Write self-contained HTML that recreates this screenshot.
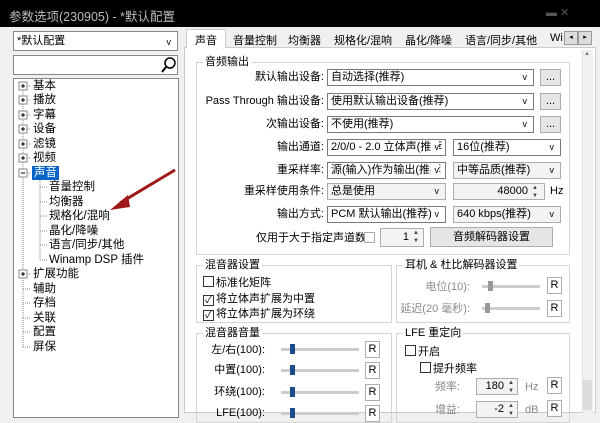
<!DOCTYPE html>
<html><head><meta charset="utf-8">
<style>
*{margin:0;padding:0;box-sizing:border-box}
body{width:600px;height:413px;overflow:hidden;background:#f0f0f0;font-family:"Liberation Sans","Noto Sans CJK SC",sans-serif;font-size:11px;color:#000;position:relative}
.a{position:absolute;white-space:nowrap}
.box{position:absolute;background:#fff;border:1px solid #adadad}
.cb{position:absolute;background:#fff;border:1px solid #7a7a7a;height:17px;line-height:15px;padding-left:3px;font-size:11px}
.cb.g{background:#f3f3f3;border-color:#adadad}
.cb .v{position:absolute;right:6px;top:0;font-size:9px}
.btn{position:absolute;background:#e6e6e6;border:1px solid #adadad;text-align:center;line-height:15px;height:17px}
.grp{position:absolute;border:1px solid #d5d5d5}
.grp .t{position:absolute;top:-8px;left:6px;background:#fff;padding:0 2px;line-height:14px}
.lbl{position:absolute;text-align:right;white-space:nowrap;line-height:14px}
.ti{position:absolute;line-height:14px;white-space:nowrap;font-size:11.5px}
.chk{display:inline-block;width:11px;height:11px;border:1px solid #333;vertical-align:-1px;margin-right:2px;background:#fff;font-size:10px;line-height:9px;text-align:center}
.sl{position:absolute;height:3px;background:#ccc}
.th{position:absolute;width:5px;height:10px;background:#1a4b8a}
.R{position:absolute;width:15px;height:17px;border:1px solid #adadad;background:#fff;text-align:center;line-height:15px;font-size:11px}
.gray{color:#8a8a8a}
.sp{position:absolute;font-size:6px;line-height:8px;color:#444}
</style></head><body>
<div class="a" style="left:0;top:0;width:600px;height:27px;background:#000"></div>
<div class="a" style="left:9px;top:6px;color:#bbb;font-size:12.5px">参数选项(230905) - *默认配置</div>
<div class="a" style="left:546px;top:6px;color:#555;font-size:11px">▬ ✕</div>

<!-- left -->
<div class="cb" style="left:13px;top:31px;width:165px;height:20px;line-height:18px;border-color:#888">*默认配置<span class="v" style="top:1px">v</span></div>
<div class="box" style="left:13px;top:55px;width:165px;height:20px;border-color:#888"></div>
<svg class="a" style="left:161px;top:56px" width="16" height="18"><circle cx="9" cy="7" r="5" fill="none" stroke="#000" stroke-width="1.5"/><line x1="5" y1="11" x2="1" y2="16" stroke="#000" stroke-width="2"/></svg>
<div class="box" style="left:13px;top:78px;width:166px;height:340px;border-color:#888"></div>
<svg class="a" style="left:15px;top:80px" width="120" height="280">
<g stroke="#888" stroke-dasharray="1,1" fill="none">
<line x1="8" y1="6" x2="8" y2="268"/>
<line x1="25" y1="100" x2="25" y2="180"/>
</g>
<g stroke="#888" stroke-dasharray="1,1">
<line x1="8" y1="6" x2="16" y2="6"/><line x1="8" y1="20" x2="16" y2="20"/><line x1="8" y1="35" x2="16" y2="35"/><line x1="8" y1="49" x2="16" y2="49"/><line x1="8" y1="64" x2="16" y2="64"/><line x1="8" y1="78" x2="16" y2="78"/><line x1="8" y1="93" x2="16" y2="93"/>
<line x1="25" y1="107" x2="33" y2="107"/><line x1="25" y1="122" x2="33" y2="122"/><line x1="25" y1="136" x2="33" y2="136"/><line x1="25" y1="151" x2="33" y2="151"/><line x1="25" y1="165" x2="33" y2="165"/><line x1="25" y1="180" x2="33" y2="180"/>
<line x1="8" y1="194" x2="16" y2="194"/><line x1="8" y1="209" x2="16" y2="209"/><line x1="8" y1="223" x2="16" y2="223"/><line x1="8" y1="238" x2="16" y2="238"/><line x1="8" y1="252" x2="16" y2="252"/><line x1="8" y1="267" x2="16" y2="267"/>
</g>
<g fill="#fff" stroke="#888">
<rect x="4" y="2" width="8" height="8"/><rect x="4" y="16" width="8" height="8"/><rect x="4" y="31" width="8" height="8"/><rect x="4" y="45" width="8" height="8"/><rect x="4" y="60" width="8" height="8"/><rect x="4" y="74" width="8" height="8"/><rect x="4" y="89" width="8" height="8"/><rect x="4" y="190" width="8" height="8"/>
</g>
<g stroke="#000"><line x1="6" y1="6" x2="10" y2="6"/><line x1="6" y1="20" x2="10" y2="20"/><line x1="6" y1="35" x2="10" y2="35"/><line x1="6" y1="49" x2="10" y2="49"/><line x1="6" y1="64" x2="10" y2="64"/><line x1="6" y1="78" x2="10" y2="78"/><line x1="6" y1="93" x2="10" y2="93"/><line x1="6" y1="194" x2="10" y2="194"/>
<line x1="8" y1="4" x2="8" y2="8"/><line x1="8" y1="18" x2="8" y2="22"/><line x1="8" y1="33" x2="8" y2="37"/><line x1="8" y1="47" x2="8" y2="51"/><line x1="8" y1="62" x2="8" y2="66"/><line x1="8" y1="76" x2="8" y2="80"/><line x1="8" y1="192" x2="8" y2="196"/></g>
</svg>
<div class="ti" style="left:33px;top:79px">基本</div>
<div class="ti" style="left:33px;top:93px">播放</div>
<div class="ti" style="left:33px;top:108px">字幕</div>
<div class="ti" style="left:33px;top:122px">设备</div>
<div class="ti" style="left:33px;top:137px">滤镜</div>
<div class="ti" style="left:33px;top:151px">视频</div>
<div class="ti" style="left:32px;top:166px;background:#0a64c8;color:#fff;padding:0 2px">声音</div>
<div class="ti" style="left:49px;top:180px">音量控制</div>
<div class="ti" style="left:49px;top:195px">均衡器</div>
<div class="ti" style="left:49px;top:209px">规格化/混响</div>
<div class="ti" style="left:49px;top:224px">晶化/降噪</div>
<div class="ti" style="left:49px;top:238px">语言/同步/其他</div>
<div class="ti" style="left:49px;top:253px">Winamp DSP 插件</div>
<div class="ti" style="left:33px;top:267px">扩展功能</div>
<div class="ti" style="left:33px;top:282px">辅助</div>
<div class="ti" style="left:33px;top:296px">存档</div>
<div class="ti" style="left:33px;top:311px">关联</div>
<div class="ti" style="left:33px;top:325px">配置</div>
<div class="ti" style="left:33px;top:340px">屏保</div>
<svg class="a" style="left:100px;top:165px" width="80" height="55"><line x1="75" y1="5" x2="20" y2="38" stroke="#a01818" stroke-width="3"/><polygon points="10,45 28,30 30,42" fill="#a01818"/></svg>

<!-- tabs -->
<div class="a" style="left:184px;top:47px;width:412px;height:366px;background:#fff;border:1px solid #ccc"></div>
<div class="a" style="left:186px;top:29px;width:40px;height:19px;background:#fff;border:1px solid #ccc;border-bottom:none"></div>
<div class="a" style="left:195px;top:32px">声音</div>
<div class="a" style="left:233px;top:32px">音量控制</div>
<div class="a" style="left:288px;top:32px">均衡器</div>
<div class="a" style="left:334px;top:32px">规格化/混响</div>
<div class="a" style="left:405px;top:32px">晶化/降噪</div>
<div class="a" style="left:465px;top:32px">语言/同步/其他</div>
<div class="a" style="left:550px;top:32px">Wi</div>
<div class="a" style="left:564px;top:31px;width:14px;height:14px;border:1px solid #999;background:#ddd;font-size:7px;text-align:center;line-height:12px">◂</div>
<div class="a" style="left:578px;top:31px;width:14px;height:14px;border:1px solid #999;background:#ddd;font-size:7px;text-align:center;line-height:12px">▸</div>
<div class="a" style="left:582px;top:50px;width:11px;height:363px;background:#f0f0f0;border-left:1px solid #e0e0e0"></div>
<div class="a" style="left:584px;top:51px;font-size:6px;color:#777">▲</div>
<div class="a" style="left:583px;top:380px;width:9px;height:30px;background:#dcdcdc"></div>

<!-- 音频输出 -->
<div class="grp" style="left:196px;top:62px;width:374px;height:193px"><span class="t">音频输出</span></div>
<div class="lbl" style="right:276px;top:70px">默认输出设备:</div>
<div class="lbl" style="right:276px;top:94px">Pass Through 输出设备:</div>
<div class="lbl" style="right:276px;top:117px">次输出设备:</div>
<div class="lbl" style="right:276px;top:140px">输出通道:</div>
<div class="lbl" style="right:276px;top:163px">重采样率:</div>
<div class="lbl" style="right:276px;top:184px">重采样使用条件:</div>
<div class="lbl" style="right:276px;top:207px">输出方式:</div>
<div class="cb" style="left:327px;top:69px;width:207px">自动选择(推荐)<span class="v">v</span></div>
<div class="cb" style="left:327px;top:93px;width:207px">使用默认输出设备(推荐)<span class="v">v</span></div>
<div class="cb" style="left:327px;top:116px;width:207px">不使用(推荐)<span class="v">v</span></div>
<div class="btn" style="left:540px;top:69px;width:21px">...</div>
<div class="btn" style="left:540px;top:93px;width:21px">...</div>
<div class="btn" style="left:540px;top:116px;width:21px">...</div>
<div class="cb" style="left:327px;top:139px;width:119px;overflow:hidden">2/0/0 - 2.0 立体声(推荐<span class="v" style="background:#fff;padding-left:4px">v</span></div>
<div class="cb" style="left:453px;top:139px;width:108px">16位(推荐)<span class="v">v</span></div>
<div class="cb" style="left:327px;top:162px;width:119px;overflow:hidden">源(输入)作为输出(推荐<span class="v" style="background:#fff;padding-left:4px">v</span></div>
<div class="cb g" style="left:453px;top:162px;width:108px">中等品质(推荐)<span class="v">v</span></div>
<div class="cb g" style="left:327px;top:183px;width:119px">总是使用<span class="v">v</span></div>
<div class="cb g" style="left:453px;top:183px;width:92px;text-align:right;padding-right:16px">48000</div>
<div class="sp" style="left:532px;top:184px">▲<br>▼</div>
<div class="a" style="left:550px;top:185px">Hz</div>
<div class="cb" style="left:327px;top:206px;width:119px">PCM 默认输出(推荐)<span class="v">v</span></div>
<div class="cb g" style="left:453px;top:206px;width:108px">640 kbps(推荐)<span class="v">v</span></div>
<div class="lbl" style="left:256px;top:231px">仅用于大于指定声道数</div>
<div class="a" style="left:364px;top:232px;width:11px;height:11px;border:1px solid #aaa;background:#fff"></div>
<div class="cb g" style="left:380px;top:228px;width:44px;text-align:right;padding-right:14px;height:19px;line-height:17px">1</div>
<div class="sp" style="left:413px;top:229px">▲<br>▼</div>
<div class="btn" style="left:430px;top:227px;width:123px;height:20px;line-height:18px">音频解码器设置</div>

<!-- 混音器设置 -->
<div class="grp" style="left:196px;top:265px;width:196px;height:58px"><span class="t">混音器设置</span></div>
<div class="a" style="left:203px;top:274px"><span class="chk"></span>标准化矩阵</div>
<div class="a" style="left:203px;top:290px"><span class="chk">✓</span>将立体声扩展为中置</div>
<div class="a" style="left:203px;top:305px"><span class="chk">✓</span>将立体声扩展为环绕</div>
<div class="grp" style="left:396px;top:265px;width:174px;height:58px"><span class="t">耳机 &amp; 杜比解码器设置</span></div>
<div class="lbl gray" style="right:130px;top:280px">电位(10):</div>
<div class="lbl gray" style="right:130px;top:302px">延迟(20 毫秒):</div>
<div class="sl" style="left:482px;top:285px;width:58px"></div><div class="th" style="left:488px;top:281px;background:#999"></div>
<div class="sl" style="left:482px;top:307px;width:58px"></div><div class="th" style="left:485px;top:303px;background:#999"></div>
<div class="R" style="left:547px;top:277px">R</div>
<div class="R" style="left:547px;top:300px">R</div>

<!-- 混音器音量 -->
<div class="grp" style="left:196px;top:333px;width:196px;height:90px"><span class="t">混音器音量</span></div>
<div class="lbl" style="right:335px;top:343px">左/右(100):</div>
<div class="lbl" style="right:335px;top:363px">中置(100):</div>
<div class="lbl" style="right:335px;top:385px">环绕(100):</div>
<div class="lbl" style="right:335px;top:406px">LFE(100):</div>
<div class="sl" style="left:281px;top:348px;width:78px"></div><div class="th" style="left:290px;top:344px"></div>
<div class="sl" style="left:281px;top:369px;width:78px"></div><div class="th" style="left:290px;top:365px"></div>
<div class="sl" style="left:281px;top:391px;width:78px"></div><div class="th" style="left:290px;top:387px"></div>
<div class="sl" style="left:281px;top:412px;width:78px"></div><div class="th" style="left:290px;top:408px"></div>
<div class="R" style="left:365px;top:341px">R</div>
<div class="R" style="left:365px;top:362px">R</div>
<div class="R" style="left:365px;top:384px">R</div>
<div class="R" style="left:365px;top:405px">R</div>

<!-- LFE -->
<div class="grp" style="left:396px;top:333px;width:174px;height:90px"><span class="t">LFE 重定向</span></div>
<div class="a" style="left:405px;top:343px"><span class="chk"></span>开启</div>
<div class="a" style="left:420px;top:360px"><span class="chk"></span>提升频率</div>
<div class="lbl gray" style="right:140px;top:380px">频率:</div>
<div class="lbl gray" style="right:140px;top:403px">增益:</div>
<div class="cb g" style="left:476px;top:378px;width:42px;text-align:right;padding-right:13px">180</div>
<div class="sp" style="left:508px;top:379px">▲<br>▼</div>
<div class="a gray" style="left:525px;top:381px">Hz</div>
<div class="R" style="left:547px;top:377px">R</div>
<div class="cb g" style="left:476px;top:401px;width:42px;text-align:right;padding-right:13px">-2</div>
<div class="sp" style="left:508px;top:402px">▲<br>▼</div>
<div class="a gray" style="left:525px;top:404px">dB</div>
<div class="R" style="left:547px;top:400px">R</div>
</body></html>
